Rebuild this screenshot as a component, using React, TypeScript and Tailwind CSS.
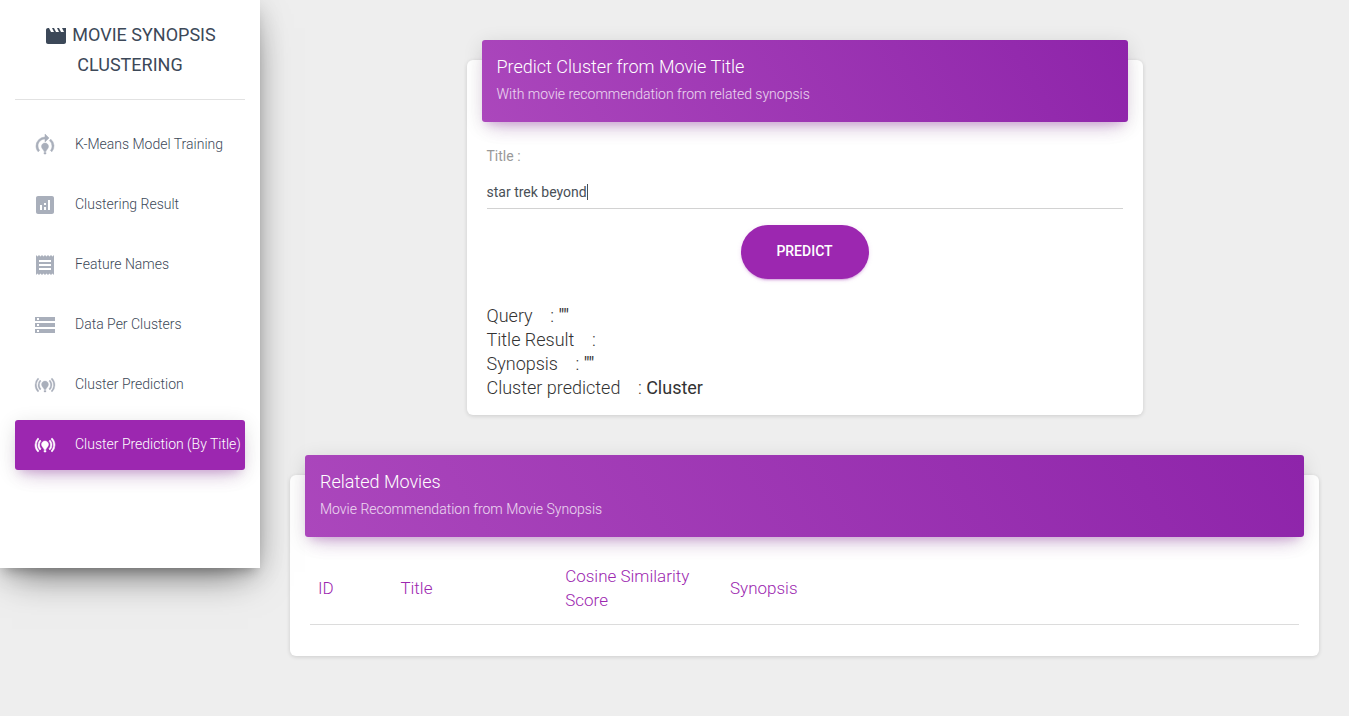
import type { ReactNode } from "react";
import type { IconType } from "react-icons";
import {
  MdAnalytics,
  MdModelTraining,
  MdMovie,
  MdOnlinePrediction,
  MdReceipt,
  MdStorage,
} from "react-icons/md";

type NavItem = { label: string; icon: IconType; iconClass: string; active?: boolean };

const navItems: NavItem[] = [
  { label: "K-Means Model Training", icon: MdModelTraining, iconClass: "text-[#a9afbb] [stroke-width:0.5]" },
  { label: "Clustering Result", icon: MdAnalytics, iconClass: "text-[#a9afbb]" },
  { label: "Feature Names", icon: MdReceipt, iconClass: "text-[#a9afbb]" },
  { label: "Data Per Clusters", icon: MdStorage, iconClass: "text-[#a9afbb]" },
  { label: "Cluster Prediction", icon: MdOnlinePrediction, iconClass: "text-[#a9afbb] [stroke-width:0.3]" },
  {
    label: "Cluster Prediction (By Title)",
    icon: MdOnlinePrediction,
    iconClass: "text-white [stroke-width:0.5]",
    active: true,
  },
];

function Sidebar() {
  return (
    <aside className="z-10 h-[568px] w-[260px] shrink-0 bg-white px-[15px] shadow-[0_16px_38px_-12px_rgba(0,0,0,0.56),0_4px_25px_0_rgba(0,0,0,0.12),0_8px_10px_-5px_rgba(0,0,0,0.2)]">
      <div className="h-[100px] border-b border-[#e2e2e2] pt-5 text-center text-lg leading-[30px] font-normal text-[#3c4858]">
        <MdMovie className="mr-1 inline size-6 align-[-7px]" />
        MOVIE SYNOPSIS
        <br />
        CLUSTERING
      </div>
      <nav className="mt-5 flex flex-col gap-2.5">
        {navItems.map(({ label, icon: Icon, iconClass, active }) => (
          <a
            key={label}
            className={
              active
                ? "flex h-[50px] items-center rounded-[3px] bg-[#9c27b0] pl-[18px] text-white shadow-[0_12px_20px_-10px_rgba(156,39,176,0.28),0_4px_20px_0_rgba(0,0,0,0.12),0_7px_8px_-5px_rgba(156,39,176,0.2)]"
                : "flex h-[50px] items-center rounded-[3px] pl-[18px] text-[#3c4858]"
            }
          >
            <Icon className={`mr-[18px] size-6 shrink-0 [&_[fill=none]]:stroke-none ${iconClass}`} strokeWidth={0} />
            <span className="-mt-0.5 text-sm font-light whitespace-nowrap">{label}</span>
          </a>
        ))}
      </nav>
    </aside>
  );
}

type CardProps = { title: string; subtitle: string; className: string; children: ReactNode };

function Card({ title, subtitle, className, children }: CardProps) {
  return (
    <section className={`rounded-md bg-white shadow-[0_1px_4px_0_rgba(0,0,0,0.14)] ${className}`}>
      <header className="mx-[15px] -mt-5 h-[82px] rounded-[3px] bg-[linear-gradient(60deg,#ab47bc,#8e24aa)] px-[15px] pt-3.5 shadow-[0_12px_20px_-10px_rgba(156,39,176,0.28),0_4px_20px_0_rgba(0,0,0,0.12),0_7px_8px_-5px_rgba(156,39,176,0.2)]">
        <h4 className="mb-[5px] text-lg leading-[25px] font-light text-white">{title}</h4>
        <p className="text-sm leading-[21px] font-light text-white/80">{subtitle}</p>
      </header>
      {children}
    </section>
  );
}

const results = [
  { label: "Query", value: '""' },
  { label: "Title Result", value: "" },
  { label: "Synopsis", value: '""' },
  { label: "Cluster predicted", value: "Cluster" },
];

export default function App() {
  return (
    <div className="flex h-[716px] overflow-hidden bg-[#eeeeee] font-['Roboto',sans-serif] font-light">
      <Sidebar />
      <main className="flex flex-1 flex-col items-center px-[30px] pt-[60px]">
        <Card
          title="Predict Cluster from Movie Title"
          subtitle="With movie recommendation from related synopsis"
          className="h-[355px] w-[676px]"
        >
          <div className="px-5 pt-6 text-lg leading-6 text-[#333333]">
            <label className="block text-sm leading-5 font-normal text-[#999999]">Title :</label>
            <div className="mt-[10px] flex h-[33px] items-center border-b border-[#d2d2d2] text-sm leading-5 font-normal text-[#495057]">
              <span className="-mt-px">star trek beyond</span>
              <span className="h-4 w-px bg-[#495057]" />
            </div>
            <div className="mt-4 flex justify-center">
              <button className="h-[54px] w-32 rounded-full bg-[#9c27b0] pb-[2px] text-sm font-medium text-white shadow-[0_2px_2px_0_rgba(156,39,176,0.14),0_3px_1px_-2px_rgba(156,39,176,0.2),0_1px_5px_0_rgba(156,39,176,0.12)]">
                PREDICT
              </button>
            </div>
            <div className="mt-[25px] whitespace-pre">
              {results.map(({ label, value }) => (
                <p key={label}>
                  {`${label}\u00a0\u00a0\u00a0 : `}
                  <span className="font-normal">{value}</span>
                </p>
              ))}
            </div>
          </div>
        </Card>
        <Card
          title="Related Movies"
          subtitle="Movie Recommendation from Movie Synopsis"
          className="mt-[60px] h-[181px] w-full"
        >
          <div className="mx-5 mt-[15px] grid h-[73px] grid-cols-[82.4px_164.8px_164.8px_1fr] items-center border-b border-[#dcdcdc] text-[17px] leading-6 text-[#9c27b0]">
            <div className="px-2">ID</div>
            <div className="px-2">Title</div>
            <div className="px-2">Cosine Similarity Score</div>
            <div className="px-2">Synopsis</div>
          </div>
        </Card>
      </main>
    </div>
  );
}
